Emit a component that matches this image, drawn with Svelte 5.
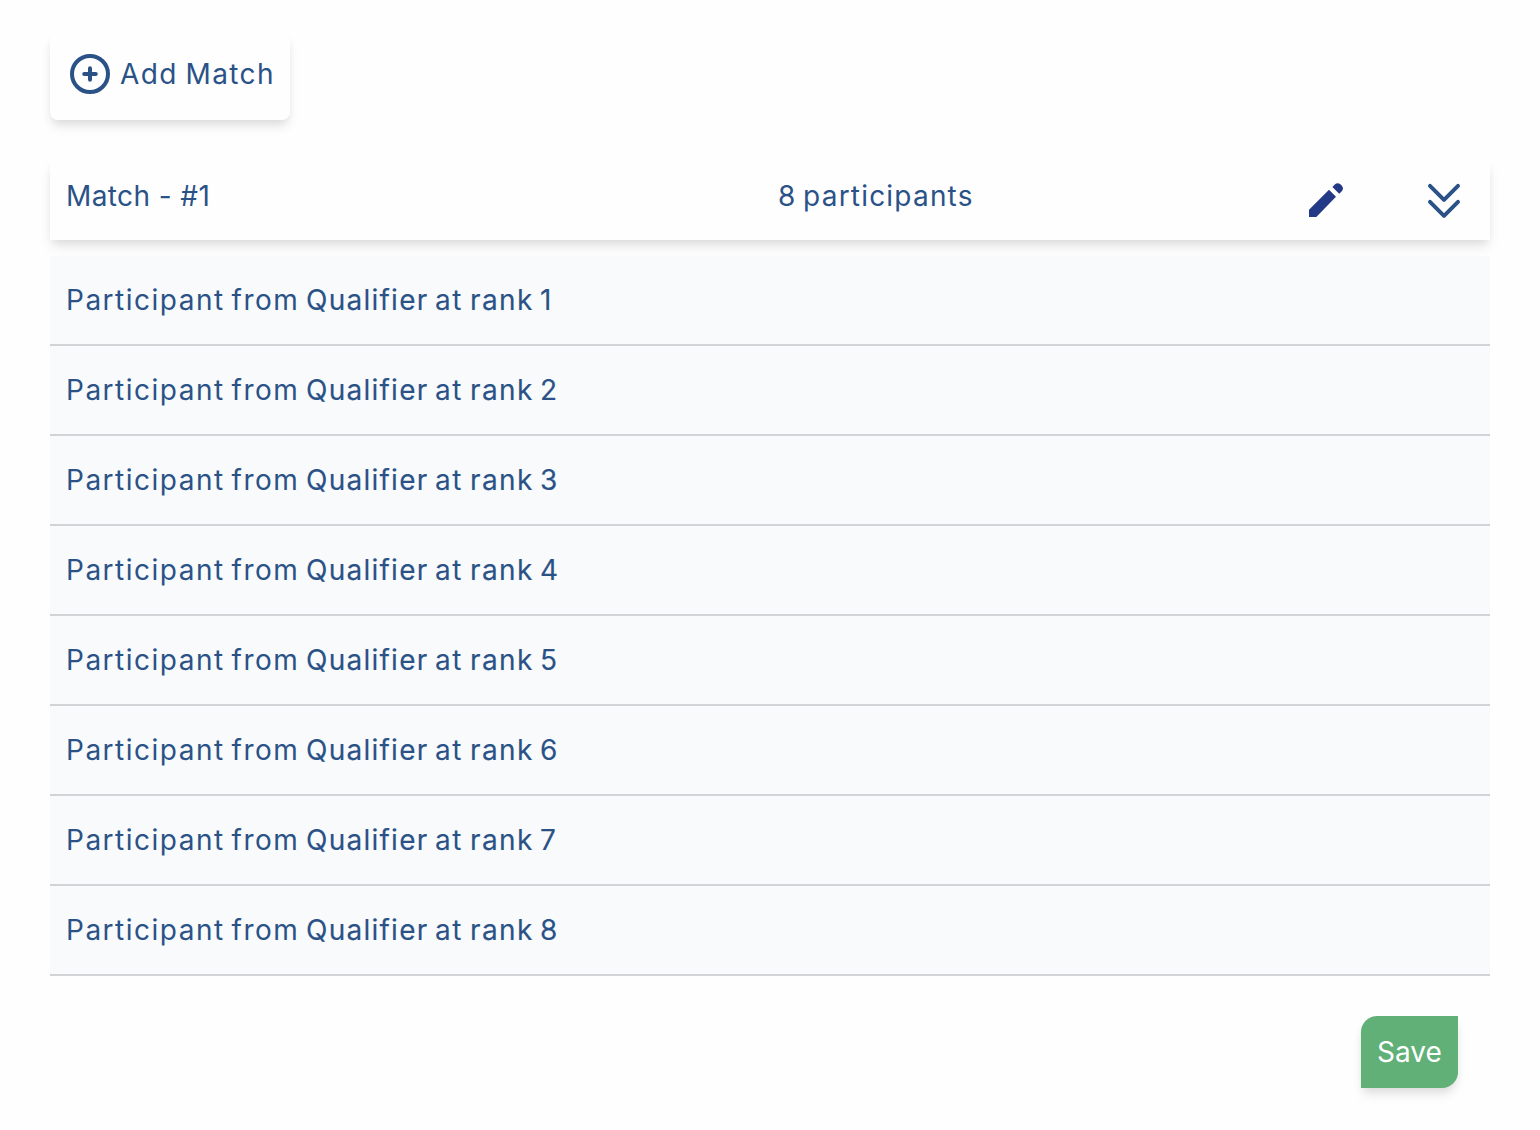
<script>
  const ranks = [1, 2, 3, 4, 5, 6, 7, 8];
</script>

<main>
  <button class="add">
    <svg width="48" height="48" viewBox="0 0 48 48" fill="none" stroke="currentColor" stroke-width="4" stroke-linecap="round">
      <circle cx="24" cy="24" r="18" />
      <path d="M24 18.2v11.6M18.2 24h11.6" />
    </svg>
    <span class="add-label">Add Match</span>
  </button>

  <header>
    <span class="title">Match - #1</span>
    <span class="count">8 participants</span>
    <svg class="pencil" width="34" height="34" viewBox="0 0 34 34" fill="currentColor">
      <path d="M0 34v-7.2L20 6.8l7 6.9L7.3 34zM23.4 4l2.4-2.4C27.3.1 29.7-.1 31.3 1.3c3 2.3 3.5 5 1.5 6.9L30.2 10.8z" />
    </svg>
    <svg class="chevrons" width="34" height="34" viewBox="0 0 34 34" fill="none" stroke="currentColor" stroke-width="4" stroke-linecap="round" stroke-linejoin="round">
      <path d="M3 2.8l14 14 14-14M3 18.8l14 14 14-14" />
    </svg>
  </header>

  <ul>
    {#each ranks as rank}
      <li><span class="from">Participant from</span>{' '}<span class="source">Qualifier</span>{' '}<span class="at">at</span>{' '}<span class="rank">rank</span>{' '}<span class="number">{rank}</span></li>
    {/each}
  </ul>

  <button class="save"><span>Save</span></button>
</main>

<style>
  :global(body) { background: #fefefe; }
  main {
    box-sizing: border-box;
    height: 1130px;
    padding: 32px 50px;
    display: flex;
    flex-direction: column;
    color: #2a5287;
    font: 400 28px/42px Inter, "Liberation Sans", sans-serif;
  }
  button { border: 0; font: inherit; color: inherit; }
  .add {
    width: 240px;
    height: 88px;
    padding: 0 0 4px 16px;
    display: flex;
    align-items: center;
    background: #fefefe;
    border-radius: 8px;
    box-shadow: 0 8px 12px -2px rgba(0, 0, 0, 0.1), 0 4px 8px -2px rgba(0, 0, 0, 0.06);
  }
  .add-label { margin-left: 6px; letter-spacing: 1.4px; word-spacing: -1.6px; }
  header {
    box-sizing: border-box;
    height: 80px;
    margin-top: 40px;
    padding: 0 29px 0 16px;
    display: flex;
    align-items: center;
    background: #fefefe;
    box-shadow: 0 8px 12px -2px rgba(0, 0, 0, 0.1), 0 4px 8px -2px rgba(0, 0, 0, 0.06);
  }
  .title { width: 712px; letter-spacing: 0.4px; }
  .count { width: 531px; letter-spacing: 1.2px; word-spacing: -2.5px; }
  .title, .count { padding-bottom: 8px; }
  .pencil { color: #253a86; }
  .chevrons { margin-left: 84px; overflow: visible; }
  ul { list-style: none; margin: 16px 0 0; padding: 0; }
  li {
    box-sizing: border-box;
    height: 90px;
    padding: 0 16px;
    display: flex;
    align-items: center;
    background: #f9fafc;
    border-bottom: 2px solid #d1d3d6;
  }
  .from { width: 240px; letter-spacing: 1.5px; word-spacing: -2.5px; }
  .source { width: 129px; letter-spacing: 1.25px; }
  .at { width: 35px; letter-spacing: 1.5px; }
  .rank { width: 70px; letter-spacing: 1.4px; }
  .source, .rank, .number { -webkit-text-stroke: 0.15px; }
  .save {
    width: 97px;
    height: 72px;
    margin: 40px 32px 0 auto;
    padding: 0;
    background: #60b077;
    color: #fff;
    border-radius: 16px 0;
    box-shadow: 0 8px 12px -2px rgba(0, 0, 0, 0.1), 0 4px 8px -2px rgba(0, 0, 0, 0.06);
  }
</style>
